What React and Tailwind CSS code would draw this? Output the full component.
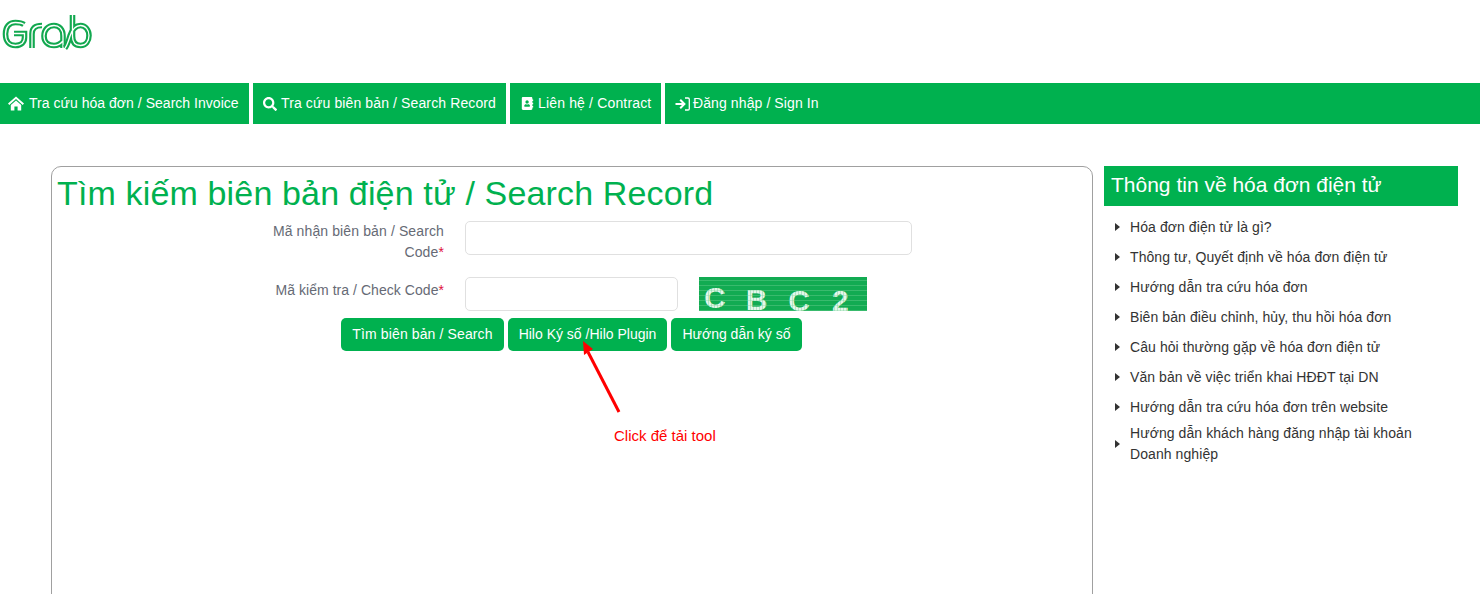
import React from "react";
import { FaSearch, FaAddressBook } from "react-icons/fa";

const font = "font-['Liberation_Sans',Arial,sans-serif]";

function HomeIcon() {
  return (
    <svg width="16" height="15" viewBox="0 0 16 15" fill="#ffffff" className="shrink-0">
      <path d="M8 .5 L16 7.6 L14.7 8.9 L8 3 L1.3 8.9 L0 7.6 Z" />
      <path d="M2.8 9 L8 4.4 L13.2 9 V14.5 H9.6 V10.5 H6.4 V14.5 H2.8 Z" />
    </svg>
  );
}

function SignInIcon() {
  return (
    <svg width="15" height="14" viewBox="0 0 15 14" fill="none" stroke="#ffffff" className="shrink-0">
      <path d="M0.5 7 H8.5" strokeWidth="2" />
      <path d="M5.2 2.8 L9.4 7 L5.2 11.2" strokeWidth="2" />
      <path d="M10 1 H13 C13.8 1 14.3 1.5 14.3 2.3 V11.7 C14.3 12.5 13.8 13 13 13 H10" strokeWidth="1.3" />
    </svg>
  );
}

function Logo() {
  const paths = [
    "M24 24.5 C22 23 19 22.5 15.5 22.5 C9 22.5 5.5 27 5.5 34 C5.5 41 9 45.5 15.5 45.5 C21.5 45.5 24.5 42 24.5 37.5 L24.5 33.5 L14 33.5",
    "M32 48 L32 34 C32 28 35 25.5 42 25.5",
    "M63 48 L63 36 C63 29 59 25.5 54 25.5 C48 25.5 44 30 44 36 C44 42 48 45.5 54 45.5 C58 45.5 60.5 44 63 41",
    "M72.5 15 L72.5 36 C72.5 42 75 45.5 80.5 45.5 C86 45.5 89 41 89 35.5 C89 30 85.5 25.5 80.5 25.5 C75 25.5 72 30 70 36 C68.5 41 67 46 65 48",
  ];
  return (
    <svg width="93" height="36" viewBox="0 14 93 36" className="block">
      {paths.map((d, i) => (
        <g key={i} fill="none">
          <path d={d} stroke="#12a84f" strokeWidth="5.6" />
          <path d={d} stroke="#ffffff" strokeWidth="1.3" />
        </g>
      ))}
    </svg>
  );
}

function NavItem({ icon, label, cls, track }) {
  return (
    <div className={`flex h-[41px] items-center bg-[#00b14f] text-[14px] text-white ${cls}`}>
      {icon}
      <span className={track}>{label}</span>
    </div>
  );
}

function Btn({ w, track, children }) {
  return (
    <button className={`${w} ${track} h-[33px] rounded-[5px] bg-[#00b14f] text-center text-[14px] text-white`}>
      {children}
    </button>
  );
}

const links = [
  "Hóa đơn điện tử là gì?",
  "Thông tư, Quyết định về hóa đơn điện tử",
  "Hướng dẫn tra cứu hóa đơn",
  "Biên bản điều chỉnh, hủy, thu hồi hóa đơn",
  "Câu hỏi thường gặp về hóa đơn điện tử",
  "Văn bản về việc triển khai HĐĐT tại DN",
  "Hướng dẫn tra cứu hóa đơn trên website",
];

function SideLink({ children, two }) {
  return (
    <li className={`flex items-center gap-[10px] pl-[11px] text-[14px] leading-[21px] tracking-[0.08px] text-[#333333] ${two ? "mt-[1px]" : "h-[30px]"}`}>
      <span className="h-0 w-0 shrink-0 border-y-[4px] border-l-[5px] border-y-transparent border-l-[#333333]" />
      <span>{children}</span>
    </li>
  );
}

export default function App() {
  return (
    <div className={`${font} h-[594px] w-[1480px] overflow-hidden bg-white`}>
      <div className="h-[83px] pt-[14px]">
        <Logo />
      </div>
      <nav className="flex gap-[4px]">
        <NavItem
          cls="w-[249px] gap-[5px] pl-[8px]"
          track="tracking-[0.03px]"
          icon={<HomeIcon />}
          label="Tra cứu hóa đơn / Search Invoice"
        />
        <NavItem
          cls="w-[253px] gap-[4px] pl-[10px]"
          track="tracking-[0.12px]"
          icon={<FaSearch size={14} />}
          label="Tra cứu biên bản / Search Record"
        />
        <NavItem
          cls="w-[151px] gap-[4px] pl-[11px]"
          track="tracking-[0.16px]"
          icon={<FaAddressBook size={13} />}
          label="Liên hệ / Contract"
        />
        <NavItem
          cls="flex-1 gap-[3px] pl-[10px]"
          track="tracking-[0.1px]"
          icon={<SignInIcon />}
          label="Đăng nhập / Sign In"
        />
      </nav>
      <div className="mt-[42px] flex items-start pl-[51px]">
        <main className="relative h-[500px] w-[1042px] rounded-t-[10px] border border-[#a0a0a0] pl-[5px]">
          <h1 className="pt-[6px] text-[34px] leading-[40px] tracking-[0.15px] text-[#00b14f]">
            Tìm kiếm biên bản điện tử / Search Record
          </h1>
          <div className="mt-[8px] flex h-[34px]">
            <label className="h-[42px] w-[387px] pl-[200px] text-right text-[14px] leading-[21px] tracking-[0.12px] text-[#666a75]">
              Mã nhận biên bản / Search Code<span className="text-[#e0103a]">*</span>
            </label>
            <input className="ml-[21px] h-[34px] w-[447px] rounded-[5px] border border-[#e0e0e0] bg-white" />
          </div>
          <div className="mt-[22px] flex h-[34px]">
            <label className="w-[387px] pt-[3px] text-right text-[14px] leading-[21px] tracking-[0.05px] text-[#666a75]">
              Mã kiểm tra / Check Code<span className="text-[#e0103a]">*</span>
            </label>
            <input className="ml-[21px] h-[34px] w-[213px] rounded-[5px] border border-[#e0e0e0] bg-white" />
            <div className="relative ml-[21px] flex h-[34px] w-[168px] items-start bg-[#12ab52] pl-[5px] text-[30px] font-bold leading-[21px] text-[#e4f6ea]">
              <span className="mt-[10px]">C</span>
              <span className="ml-[20px] mt-[12px]">B</span>
              <span className="ml-[21px] mt-[13px]">C</span>
              <span className="ml-[22px] mt-[13px]">2</span>
              <div className="absolute inset-0 bg-[repeating-linear-gradient(90deg,rgba(18,171,82,0.22)_0px,rgba(18,171,82,0.22)_1px,transparent_1px,transparent_3px)]" />
              <div className="absolute inset-x-0 bottom-0 top-[3px] bg-[repeating-linear-gradient(0deg,rgba(130,215,160,0.35)_0px,rgba(130,215,160,0.35)_1px,transparent_1px,transparent_5px)]" />
            </div>
          </div>
          <div className="mt-[7px] flex gap-[4px] pl-[284px]">
            <Btn w="w-[163px]" track="tracking-[0.12px]">Tìm biên bản / Search</Btn>
            <Btn w="w-[159px]">Hilo Ký số /Hilo Plugin</Btn>
            <Btn w="w-[131px]">Hướng dẫn ký số</Btn>
          </div>
          <svg width="60" height="80" viewBox="0 0 60 80" className="absolute left-[520px] top-[170px]">
            <path d="M47 75 L16 15" stroke="#ff0000" strokeWidth="3" fill="none" />
            <path d="M11 4 L12 18 L21 12 Z" fill="#ff0000" />
          </svg>
          <span className="absolute left-[562px] top-[261px] text-[15px] leading-[16px] text-[#ff0000]">
            Click để tải tool
          </span>
        </main>
        <aside className="ml-[11px] w-[354px]">
          <div className="flex h-[40px] items-center bg-[#00b14f] pb-[2px] pl-[7px] text-[21px] text-white">
            Thông tin về hóa đơn điện tử
          </div>
          <ul className="mt-[6px]">
            {links.map((t) => (
              <SideLink key={t}>{t}</SideLink>
            ))}
            <SideLink two>
              Hướng dẫn khách hàng đăng nhập tài khoản
              <br />
              Doanh nghiệp
            </SideLink>
          </ul>
        </aside>
      </div>
    </div>
  );
}
